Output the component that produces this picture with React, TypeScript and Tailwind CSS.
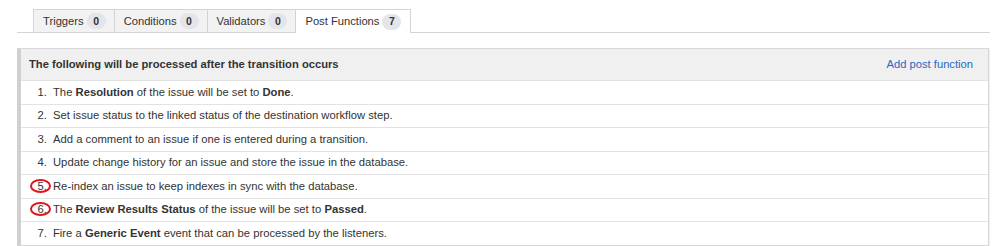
import React from "react";

const Badge = ({ n }: { n: string }) => (
  <span className="ml-[3px] inline-flex h-[16px] min-w-[19px] items-center justify-center rounded-full bg-[#e3e5ea] px-[5px] text-[10.5px] font-bold leading-none text-[#333]">
    {n}
  </span>
);

const Tab = ({ label, n, active }: { label: string; n: string; active?: boolean }) => (
  <div
    className={
      "flex items-center border-t border-l border-r border-[#d4d4d4] pl-[9px] text-[11.2px] text-[#333] -ml-px " +
      (active ? "bg-white h-[24px] -mb-px pr-[9px]" : "bg-[#f2f2f2] h-[23px] pr-[8px]")
    }
  >
    {label}
    <Badge n={n} />
  </div>
);

const Row = ({ num, children, circled }: { num: string; children: React.ReactNode; circled?: boolean }) => (
  <div className="flex h-[23.5px] items-center border-t border-[#e3e3e3] text-[11.25px] text-[#333]">
    <span className="w-[26px] text-right">
      <span className="relative inline-block leading-[14px]">
        {num}
        {circled && (
          <span className="pointer-events-none absolute left-[-8px] top-0 h-[14px] w-[21px] rounded-[50%] border-2 border-[#e0131a]" />
        )}
      </span>
    </span>
    <span className="ml-[6px]">{children}</span>
  </div>
);

export default function App() {
  return (
    <div
      className="h-[246px] w-[999px] bg-white"
      style={{ fontFamily: '"Liberation Sans", Arial, sans-serif' }}
    >
      <div className="ml-[17px] mr-[9px] pt-[9px]">
        <div className="flex items-end border-b border-[#d4d4d4] pl-[17px]">
          <Tab label="Triggers" n="0" />
          <Tab label="Conditions" n="0" />
          <Tab label="Validators" n="0" />
          <Tab label="Post Functions" n="7" active />
        </div>
        <div className="mt-[15px] mr-[1px] border border-l-[4px] border-[#d8d8d8] border-l-[#d0d0d0] shadow-[1px_1px_1px_rgba(0,0,0,0.06)]">
          <div className="flex h-[31px] items-center justify-between bg-[#f0f0f0] pl-[8px] pr-[15px] text-[11.2px]">
            <span className="font-bold text-[#333]">The following will be processed after the transition occurs</span>
            <span className="text-[#2a67c0]">Add post function</span>
          </div>
          <div className="bg-white">
            <Row num="1.">
              The <b>Resolution</b> of the issue will be set to <b>Done</b>.
            </Row>
            <Row num="2.">Set issue status to the linked status of the destination workflow step.</Row>
            <Row num="3.">Add a comment to an issue if one is entered during a transition.</Row>
            <Row num="4.">Update change history for an issue and store the issue in the database.</Row>
            <Row num="5." circled>
              Re-index an issue to keep indexes in sync with the database.
            </Row>
            <Row num="6." circled>
              The <b>Review Results Status</b> of the issue will be set to <b>Passed</b>.
            </Row>
            <Row num="7.">
              Fire a <b>Generic Event</b> event that can be processed by the listeners.
            </Row>
          </div>
        </div>
      </div>
    </div>
  );
}
